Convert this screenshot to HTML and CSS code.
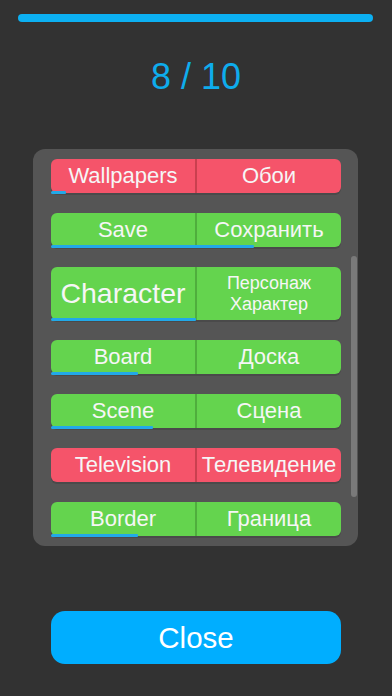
FILE: index.html
```html
<!DOCTYPE html>
<html>
<head>
<meta charset="utf-8">
<link rel="stylesheet" href="styles.css">
</head>
<body>
<div class="screen">
  <div class="topbar"></div>
  <div class="score">8 / 10</div>
  <div class="panel">
    <div class="list">
      <div class="row red">
        <div class="cell">Wallpapers</div><div class="div"></div><div class="cell">Обои</div>
        <div class="prog" style="width:5%"></div>
      </div>
      <div class="row green">
        <div class="cell">Save</div><div class="div"></div><div class="cell">Сохранить</div>
        <div class="prog" style="width:70%"></div>
      </div>
      <div class="row green tall">
        <div class="cell big">Character</div><div class="div"></div><div class="cell small">Персонаж<br>Характер</div>
        <div class="prog" style="width:50%"></div>
      </div>
      <div class="row green">
        <div class="cell">Board</div><div class="div"></div><div class="cell">Доска</div>
        <div class="prog" style="width:30%"></div>
      </div>
      <div class="row green">
        <div class="cell">Scene</div><div class="div"></div><div class="cell">Сцена</div>
        <div class="prog" style="width:35%"></div>
      </div>
      <div class="row red">
        <div class="cell">Television</div><div class="div"></div><div class="cell">Телевидение</div>
      </div>
      <div class="row green">
        <div class="cell">Border</div><div class="div"></div><div class="cell">Граница</div>
        <div class="prog" style="width:30%"></div>
      </div>
    </div>
    <div class="scrollbar"></div>
  </div>
  <button class="close">Close</button>
</div>
</body>
</html>
```
FILE: styles.css
```css
html, body {
  margin: 0;
  padding: 0;
  background: #323232;
}
body {
  width: 392px;
  height: 696px;
  overflow: hidden;
  font-family: "Liberation Sans", Arial, sans-serif;
}
.screen {
  display: flex;
  flex-direction: column;
  align-items: center;
}
.topbar {
  margin-top: 14px;
  width: 355px;
  height: 8px;
  border-radius: 4px;
  background: #0cb0f2;
  margin-left: -1px;
}
.score {
  margin-top: 33px;
  height: 44px;
  line-height: 44px;
  font-size: 36px;
  color: #0eacec;
}
.panel {
  position: relative;
  margin-top: 50px;
  width: 325px;
  box-sizing: border-box;
  padding: 10px 17px 10px 18px;
  background: #555555;
  border-radius: 12px;
  margin-left: -1px;
}
.list {
  display: flex;
  flex-direction: column;
  gap: 20px;
}
.row {
  position: relative;
  display: grid;
  grid-template-columns: 1fr 2px 1fr;
  height: 34px;
  border-radius: 6px;
  box-shadow: 0 2px 0 #4a4a4a;
  color: #f6f6f6;
  font-size: 22px;
}
.row.tall {
  height: 53px;
}
.red { background: #f5546a; }
.green { background: #64d44e; }
.red .div { background: #c9404f; }
.green .div { background: #4fae3d; }
.cell {
  display: flex;
  align-items: center;
  justify-content: center;
  text-align: center;
  white-space: nowrap;
}
.cell.big {
  font-size: 28.5px;
}
.cell.small {
  font-size: 18px;
  line-height: 21px;
}
.prog {
  position: absolute;
  left: 0;
  bottom: -1px;
  height: 3px;
  background: #22a9e8;
  border-radius: 3px 2px 2px 3px;
}
.scrollbar {
  position: absolute;
  right: 1px;
  top: 107px;
  width: 6px;
  height: 241px;
  border-radius: 3px;
  background: #7a7a7a;
}
.close {
  margin-top: 65px;
  width: 290px;
  height: 53px;
  border: none;
  border-radius: 14px;
  background: #00aeff;
  color: #ffffff;
  font-family: "Liberation Sans", Arial, sans-serif;
  font-size: 29.5px;
  padding: 0;
}
```
